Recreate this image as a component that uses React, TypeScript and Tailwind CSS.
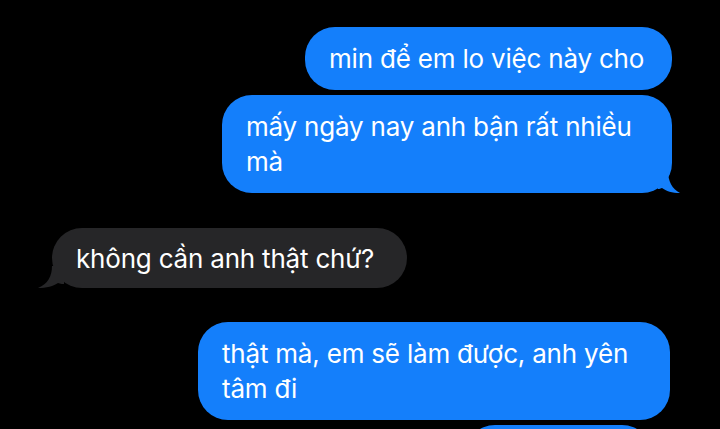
import React from 'react';

const font = { fontFamily: 'Inter, "Noto Sans", sans-serif' };

const RightTail = () => (
  <svg className="absolute -right-[10px] bottom-0" width="24" height="22" viewBox="0 0 24 22">
    <path d="M0 0 H10 C10 10 14 18 22 22 C14 22 8 20 4 17 C2 18 0 18 0 18 Z" fill="#147ffb" />
  </svg>
);

const LeftTail = () => (
  <svg className="absolute -left-[14px] bottom-0" width="26" height="22" viewBox="0 0 26 22">
    <path d="M26 0 H14 C14 10 10 18 0 22 C8 22 16 20 20 17 C22 18 26 18 26 18 Z" fill="#262628" />
  </svg>
);

const Sent = ({ children, className = '', tail = false }) => (
  <div className={`relative self-end bg-[#147ffb] text-white rounded-[30px] px-6 py-[14px] ${className}`}>
    {children}
    {tail && <RightTail />}
  </div>
);

export default function App() {
  return (
    <div className="w-[720px] h-[429px] overflow-hidden bg-black" style={font}>
      <div className="flex flex-col pt-[27px] pr-[48px] pl-[52px] text-[26px] leading-[35px] tracking-[-0.2px]">
        <Sent className="w-[367px]">min để em lo việc này cho</Sent>
        <Sent className="w-[450px] mt-[5px] rounded-[26px]" tail>
          mấy ngày nay anh bận rất nhiều<br />mà
        </Sent>
        <div className="relative self-start flex items-center mt-[35px] h-[60px] bg-[#262628] text-white rounded-[30px] px-6 w-[355px]">
          không cần anh thật chứ?
          <LeftTail />
        </div>
        <Sent className="w-[472px] mt-[34px] mr-[2px] rounded-[26px]">
          thật mà, em sẽ làm được, anh yên<br />tâm đi
        </Sent>
        <Sent className="w-[187px] h-[63px] mt-[5px] mr-[20px]">&nbsp;</Sent>
      </div>
    </div>
  );
}
